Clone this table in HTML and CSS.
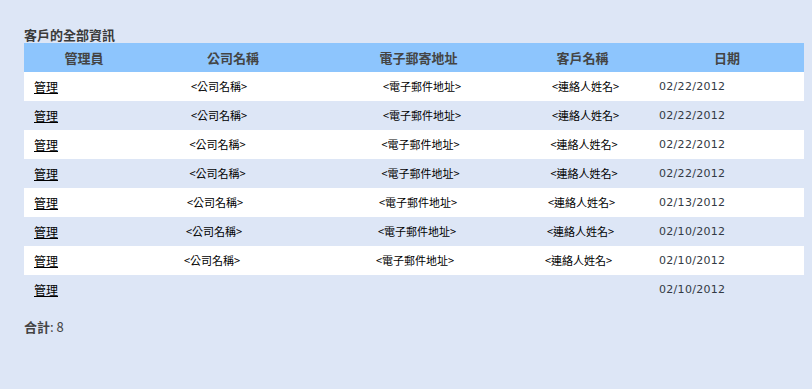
FILE: index.html
```html
<!DOCTYPE html>
<html lang="zh-Hant">
<head>
<meta charset="utf-8">
<title>客戶的全部資訊</title>
<link rel="stylesheet" href="styles.css">
</head>
<body>
<div class="page">
  <h1 class="title">客戶的全部資訊</h1>
  <table class="grid">
    <colgroup>
      <col class="c-admin"><col class="c-company"><col class="c-email"><col class="c-contact"><col class="c-date">
    </colgroup>
    <thead>
      <tr class="head">
        <th>管理員</th><th>公司名稱</th><th>電子郵寄地址</th><th>客戶名稱</th><th>日期</th>
      </tr>
    </thead>
    <tbody>
      <tr class="row odd s0"><td class="admin"><a href="#">管理</a></td><td class="company">&lt;公司名稱&gt;</td><td class="email">&lt;電子郵件地址&gt;</td><td class="contact">&lt;連絡人姓名&gt;</td><td class="date">02/22/2012</td></tr>
      <tr class="row even s0"><td class="admin"><a href="#">管理</a></td><td class="company">&lt;公司名稱&gt;</td><td class="email">&lt;電子郵件地址&gt;</td><td class="contact">&lt;連絡人姓名&gt;</td><td class="date">02/22/2012</td></tr>
      <tr class="row odd s1"><td class="admin"><a href="#">管理</a></td><td class="company">&lt;公司名稱&gt;</td><td class="email">&lt;電子郵件地址&gt;</td><td class="contact">&lt;連絡人姓名&gt;</td><td class="date">02/22/2012</td></tr>
      <tr class="row even s1"><td class="admin"><a href="#">管理</a></td><td class="company">&lt;公司名稱&gt;</td><td class="email">&lt;電子郵件地址&gt;</td><td class="contact">&lt;連絡人姓名&gt;</td><td class="date">02/22/2012</td></tr>
      <tr class="row odd s2"><td class="admin"><a href="#">管理</a></td><td class="company">&lt;公司名稱&gt;</td><td class="email">&lt;電子郵件地址&gt;</td><td class="contact">&lt;連絡人姓名&gt;</td><td class="date">02/13/2012</td></tr>
      <tr class="row even s3"><td class="admin"><a href="#">管理</a></td><td class="company">&lt;公司名稱&gt;</td><td class="email">&lt;電子郵件地址&gt;</td><td class="contact">&lt;連絡人姓名&gt;</td><td class="date">02/10/2012</td></tr>
      <tr class="row odd s4"><td class="admin"><a href="#">管理</a></td><td class="company">&lt;公司名稱&gt;</td><td class="email">&lt;電子郵件地址&gt;</td><td class="contact">&lt;連絡人姓名&gt;</td><td class="date">02/10/2012</td></tr>
      <tr class="row even s0"><td class="admin"><a href="#">管理</a></td><td class="company"></td><td class="email"></td><td class="contact"></td><td class="date">02/10/2012</td></tr>
    </tbody>
  </table>
  <p class="total"><b>合計</b>: 8</p>
</div>
</body>
</html>
```
FILE: styles.css
```css
html, body {
  margin: 0;
  padding: 0;
  background: #dde6f6;
}
.page {
  padding: 27px 8px 0 24px;
  font-family: "Noto Sans CJK TC", "Noto Sans", sans-serif;
}
.title {
  margin: 0;
  font-size: 13px;
  line-height: 16px;
  font-weight: bold;
  color: #3a3a3a;
}
.grid {
  width: 780px;
  border-collapse: collapse;
  table-layout: fixed;
}
.c-admin { width: 120px; }
.c-company { width: 178px; }
.c-email { width: 193px; }
.c-contact { width: 135px; }
.c-date { width: 154px; }
.head {
  background: #8dc5fd;
  height: 29px;
}
.head th {
  padding: 0;
  font-size: 13px;
  font-weight: bold;
  color: #444;
  text-align: center;
  vertical-align: middle;
  line-height: 16px;
}
.row {
  height: 29px;
}
.row td {
  padding: 0;
  vertical-align: middle;
  text-align: left;
  font-size: 11px;
  line-height: 15px;
  color: #000;
  white-space: nowrap;
}
.odd { background: #ffffff; }
.even { background: transparent; }
.row .admin {
  padding-left: 10px;
  font-size: 12px;
}
.admin a {
  color: #000;
  text-decoration: underline;
}
.row .company { padding-left: 47px; }
.row .email { padding-left: 61px; }
.row .contact { padding-left: 37px; }
.s1 .company, .s1 .email, .s1 .contact { transform: translateX(-1.5px); }
.s2 .company, .s2 .email, .s2 .contact { transform: translateX(-4px); }
.s3 .company, .s3 .email, .s3 .contact { transform: translateX(-5px); }
.s4 .company, .s4 .email, .s4 .contact { transform: translateX(-7px); }
.row .date {
  padding-left: 9px;
  font-family: "DejaVu Sans", Verdana, sans-serif;
  font-size: 11px;
  letter-spacing: 0.3px;
  color: #333a44;
}
.total {
  margin: 14px 0 0;
  font-size: 13px;
  line-height: 17px;
  color: #444;
}
.total b {
  font-weight: bold;
}
```
